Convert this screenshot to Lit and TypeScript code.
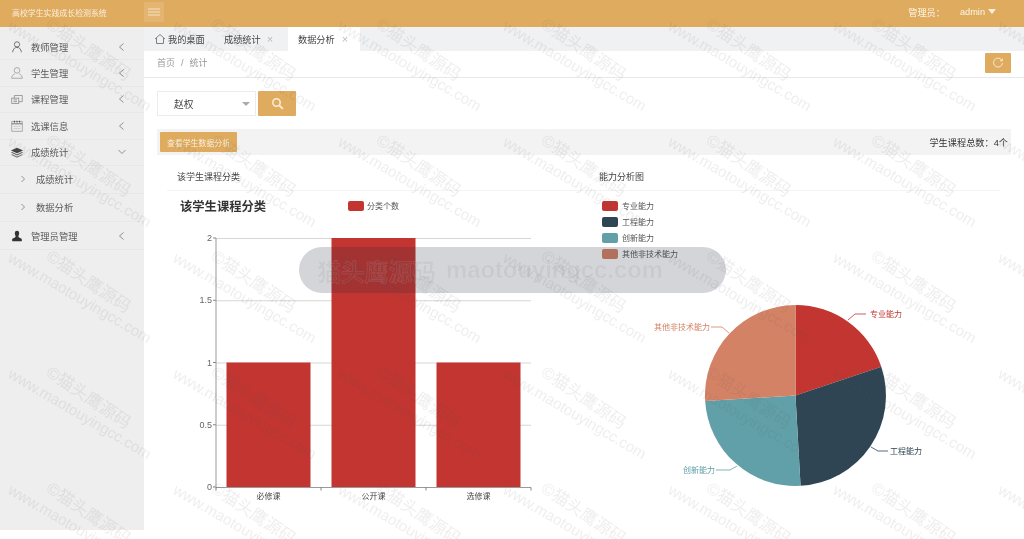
import { LitElement, html, css, svg } from "lit";
import { customElement } from "lit/decorators.js";

const CX = 206.5;
const CY = 204.5;
const R = 90.5;
const polar = (deg: number) => {
  const a = ((deg - 90) * Math.PI) / 180;
  return [CX + R * Math.cos(a), CY + R * Math.sin(a)];
};
const slice = (from: number, to: number) => {
  const [x1, y1] = polar(from);
  const [x2, y2] = polar(to);
  return `M${CX} ${CY}L${x1} ${y1}A${R} ${R} 0 ${to - from > 180 ? 1 : 0} 1 ${x2} ${y2}Z`;
};

const ICONS = {
  user: svg`<circle cx="8" cy="5" r="3" fill="none" stroke="#666" stroke-width="1"/><path d="M3 14c.5-4 2.500-5.500 5-5.500s4.500 1.500 5 5.500" fill="none" stroke="#666" stroke-width="1"/>`,
  student: svg`<circle cx="8" cy="5" r="3.200" fill="none" stroke="#999" stroke-width="0.9"/><path d="M2 14c0-3 2-4.500 3.500-5M14 14c0-3-2-4.500-3.500-5M2 14h12" fill="none" stroke="#999" stroke-width="0.9"/>`,
  course: svg`<rect x="2" y="7" width="8" height="6" fill="none" stroke="#888" stroke-width="0.9"/><path d="M5 7V4h9v7h-4M4 9h4M4 11h4" fill="none" stroke="#888" stroke-width="0.9"/>`,
  calendar: svg`<rect x="2" y="3" width="12" height="11" fill="none" stroke="#999" stroke-width="0.9"/><path d="M2 5.500h12" stroke="#777" stroke-width="1.200"/><path d="M5 2v2M8 2v2M11 2v2" stroke="#444" stroke-width="1.100"/><path d="M4 8.500h8M4 11h8" stroke="#ccc" stroke-width="1"/>`,
  stack: svg`<path d="M8 3l7 3.200L8 9.400 1 6.200z" fill="#444"/><path d="M2.500 8L8 10.500 13.500 8 15 8.700 8 12 1 8.700z" fill="#666"/><path d="M2.500 10.500L8 13l5.500-2.500 1.500.7L8 14.500l-7-3.300z" fill="#777"/>`,
  admin: svg`<path d="M5.500 4.500a2.500 2.500 0 015 0c0 2-.8 3-.9 4 0 1.500 3.900 1.700 3.900 3.500V14h-11v-2c0-1.800 3.900-2 3.900-3.500-.1-1-.9-2-.9-4z" fill="#333"/>`,
};

const MENU = [
  { icon: "user", label: "教师管理", arrow: "left" },
  { icon: "student", label: "学生管理", arrow: "left" },
  { icon: "course", label: "课程管理", arrow: "left" },
  { icon: "calendar", label: "选课信息", arrow: "left" },
  { icon: "stack", label: "成绩统计", arrow: "down" },
  { sub: true, label: "成绩统计" },
  { sub: true, label: "数据分析" },
  { icon: "admin", label: "管理员管理", arrow: "left", tall: true },
];

const BARS = [
  { x: 59.5, h: 124.5, y: 124.5, label: "必修课", lx: 101.5 },
  { x: 164.5, h: 249, y: 0, label: "公开课", lx: 206.5 },
  { x: 269.5, h: 124.5, y: 124.5, label: "选修课", lx: 311.5 },
];

@customElement("app-root")
export class AppRoot extends LitElement {
  static styles = css`
    :host {
      display: block;
      position: relative;
      width: 1024px;
      height: 539px;
      overflow: hidden;
      background: #fff;
      filter: blur(0.4px);
      font-family: "Liberation Sans", "Noto Sans CJK SC", sans-serif;
      color: #555;
    }
    .header { height: 27px; box-sizing: border-box; padding-bottom: 3px; background: #dfab5f; display: flex; align-items: center; color: #fff; }
    .brand { width: 144px; padding-left: 12px; box-sizing: border-box; font-size: 7.9px; color: #fbeedc; }
    .burger { width: 20px; height: 20px; background: #e3b570; display: flex; align-items: center; justify-content: center; }
    .user { margin-left: auto; display: flex; align-items: center; font-size: 9.2px; padding-right: 28px; color: #fdf5e9; }
    .user .role { margin-right: 15px; }
    .caret { width: 0; height: 0; border: 4.5px solid transparent; border-top: 5px solid #fbeedc; border-bottom: 0; margin: -2px 0 0 3px; }
    .body { display: flex; }
    .side { width: 144px; height: 503px; background: #eeeeee; padding-top: 7px; box-sizing: border-box; flex: none; }
    .row {
      height: 26.4px;
      box-sizing: border-box;
      border-bottom: 1px solid #e7e7e7;
      display: flex;
      align-items: center;
      padding-left: 10px;
      font-size: 9.3px;
      color: #5a5a5a;
    }
    .row.sub, .row.tall { height: 28px; }
    .row.tall { padding-top: 1px; }
    .row.sub { padding-left: 20px; }
    .row .ico { width: 14px; height: 14px; margin-right: 7px; flex: none; }
    .row .gt { width: 6px; height: 8px; margin-right: 10px; flex: none; }
    .row .ar { margin-left: auto; margin-right: 18px; flex: none; }
    .main { flex: 1; min-width: 0; }
    .tabs { height: 24px; background: #f0f1f3; display: flex; font-size: 9.2px; color: #444; }
    .tab { display: flex; align-items: center; padding-left: 10px; gap: 6px; box-sizing: border-box; }
    .tab.first { width: 70px; gap: 2px; }
    .tab.mid { width: 74px; }
    .tab.on { background: #fff; width: 72px; gap: 7px; }
    .x { color: #bbb; font-size: 11px; line-height: 1; }
    .crumb {
      height: 27px;
      box-sizing: border-box;
      border-bottom: 1px solid #e8e8e8;
      padding: 0 13px 3px;
      display: flex;
      align-items: center;
      justify-content: space-between;
      font-size: 9px;
      color: #999;
    }
    .crumb i { font-style: normal; margin: 0 6px; }
    .refresh { width: 26px; height: 20px; background: #dfab5f; border-radius: 1px; display: flex; align-items: center; justify-content: center; }
    .search { display: flex; margin: 13px 0 0 13px; gap: 2px; }
    .select {
      width: 99px;
      height: 25px;
      box-sizing: border-box;
      border: 1px solid #ececec;
      display: flex;
      align-items: center;
      justify-content: space-between;
      padding: 0 5px 0 16px;
      font-size: 9.7px;
      color: #444;
    }
    .select b { width: 0; height: 0; border: 4px solid transparent; border-top: 4.5px solid #aaa; border-bottom: 0; }
    .go { width: 38px; height: 25px; background: #dfab5f; border-radius: 1px; display: flex; align-items: center; justify-content: center; }
    .bar {
      margin: 13px 13px 0;
      height: 26px;
      background: #f3f3f3;
      display: flex;
      align-items: center;
      justify-content: space-between;
      padding: 0 3px;
      font-size: 9.2px;
      color: #333;
    }
    .btn { width: 77px; height: 20px; background: #dfab5f; border-radius: 1px; color: #fbeedc; font-size: 7.9px; display: flex; align-items: center; justify-content: center; }
    .cards { display: flex; margin: 0 24px 0 23px; }
    .card { flex: none; }
    .card.l { width: 422px; }
    .card.r { width: 411px; }
    .card h4 {
      margin: 0;
      height: 36px;
      box-sizing: border-box;
      border-bottom: 1px solid #f4f4f4;
      padding: 16px 0 0 10px;
      font-size: 9px;
      line-height: 12px;
      font-weight: 400;
      color: #444;
    }
    .card svg { display: block; }
    .t8 { font-size: 8px; fill: #444; }
    .lg { font-size: 8px; fill: #555; }
    .lbl { font-size: 8px; }
    .tick { font-size: 9px; fill: #666; }
    .title { font-size: 12.3px; font-weight: 700; fill: #333; }
    .overlay { position: absolute; inset: 0; pointer-events: none; }
    .wm { font-family: "Liberation Sans", "Noto Sans CJK SC", sans-serif; fill: rgba(90, 90, 90, 0.1); }
    .pill {
      position: absolute;
      left: 299px;
      top: 247px;
      width: 427px;
      height: 46px;
      border-radius: 23px;
      background: rgba(40, 45, 60, 0.2);
      box-sizing: border-box;
      padding-left: 18px;
      display: flex;
      align-items: center;
      gap: 10px;
      font-size: 23.8px;
      font-weight: 700;
      white-space: pre;
      color: rgba(110, 112, 118, 0.1);
      -webkit-text-stroke: 0.5px rgba(255, 255, 255, 0.14);
    }
  `;

  private watermark() {
    const xs = [7, 172, 337, 502, 667, 832, 997];
    const ys = [-93, 23, 139, 255, 371, 487];
    return xs.flatMap((x) =>
      ys.map(
        (y) => svg`
        <text class="wm" font-size="15.2" transform="translate(${x} ${y + 6}) rotate(30.5)">www.maotouyingcc.com</text>
        <text class="wm" font-size="17" transform="translate(${x + 38} ${y + 4}) rotate(34)">©猫头鹰源码</text>`
      )
    );
  }

  private chevron(dir: string) {
    const d = dir === "down" ? "M0.5 3l3.500 3.500L7.500 3" : "M5.500 1.500L1.500 5l4 3.500";
    return html`<svg class="ar" width="8" height="10" viewBox="0 0 8 10"><path d=${d} fill="none" stroke="#777" stroke-width="0.8"/></svg>`;
  }

  render() {
    return html`
      <div class="header">
        <div class="brand">高校学生实践成长检测系统</div>
        <div class="burger">
          <svg width="12" height="8" viewBox="0 0 12 8"><path d="M0 1h12M0 4h12M0 7h12" stroke="#fbeedc" stroke-width="0.8"/></svg>
        </div>
        <div class="user"><span class="role">管理员：</span><span>admin</span><span class="caret"></span></div>
      </div>
      <div class="body">
        <div class="side">
          ${MENU.map((m) =>
            m.sub
              ? html`<div class="row sub">
                  <svg class="gt" viewBox="0 0 6 8"><path d="M1.500 1l3 3-3 3" fill="none" stroke="#888" stroke-width="0.9"/></svg>${m.label}
                </div>`
              : html`<div class="row ${m.tall ? "tall" : ""}">
                  <svg class="ico" viewBox="0 0 16 16">${ICONS[m.icon as keyof typeof ICONS]}</svg>${m.label}${this.chevron(m.arrow as string)}
                </div>`
          )}
        </div>
        <div class="main">
          <div class="tabs">
            <div class="tab first">
              <svg width="12" height="12" viewBox="0 0 12 12"><path d="M1 6l5-4.500L11 6M2.500 5v5.500h7V5" fill="none" stroke="#666" stroke-width="0.8"/></svg>我的桌面
            </div>
            <div class="tab mid">成绩统计<span class="x">×</span></div>
            <div class="tab on">数据分析<span class="x">×</span></div>
          </div>
          <div class="crumb">
            <span>首页<i>/</i>统计</span>
            <div class="refresh">
              <svg width="12" height="12" viewBox="0 0 12 12"><path d="M10 3.500A4.500 4.500 0 1 0 10.500 6M10.300 1.500v2.300H8" fill="none" stroke="#fbeedc" stroke-width="0.9"/></svg>
            </div>
          </div>
          <div class="search">
            <div class="select"><span>赵权</span><b></b></div>
            <div class="go">
              <svg width="13" height="13" viewBox="0 0 13 13"><circle cx="5.500" cy="5.500" r="3.700" fill="none" stroke="#fbeedc" stroke-width="1.500"/><path d="M8.300 8.300l3.500 3.500" stroke="#fbeedc" stroke-width="1.800"/></svg>
            </div>
          </div>
          <div class="bar">
            <div class="btn">查看学生数据分析</div>
            <span>学生课程总数：4个</span>
          </div>
          <div class="cards">
            <div class="card l">
              <h4>该学生课程分类</h4>
              <svg width="422" height="339" viewBox="0 0 422 339">
                <text class="title" x="13" y="20">该学生课程分类</text>
                <rect x="181" y="10" width="16" height="10" rx="2" fill="#c23531"/>
                <text class="lg" x="200" y="18">分类个数</text>
                <g transform="translate(0 47)">
                  ${[0, 62.25, 124.5, 186.75, 249].map(
                    (y, i) => svg`
                    <path d="M46 ${y}H49" stroke="#666" stroke-width="0.8"/>
                    ${i < 4 ? svg`<path d="M49 ${y + 0.5}H364" stroke="#ccc" stroke-width="0.8"/>` : null}
                    <text class="tick" x="45" y=${y + 3} text-anchor="end">${["2", "1.5", "1", "0.5", "0"][i]}</text>`
                  )}
                  ${BARS.map(
                    (b) => svg`
                    <rect x=${b.x} y=${b.y} width="84" height=${b.h} fill="#c23531"/>
                    <text class="t8" x=${b.lx} y="261" text-anchor="middle">${b.label}</text>`
                  )}
                  <path d="M49 0V249.500H364" fill="none" stroke="#999" stroke-width="1"/>
                  <path d="M49 249.500v3M154 249.500v3M259 249.500v3M364 249.500v3" stroke="#666" stroke-width="0.8"/>
                </g>
              </svg>
            </div>
            <div class="card r">
              <h4>能力分析图</h4>
              <svg width="411" height="339" viewBox="0 0 411 339">
                ${[
                  ["专业能力", "#c23531"],
                  ["工程能力", "#2f4554"],
                  ["创新能力", "#61a0a8"],
                  ["其他非技术能力", "#d48265"],
                ].map(
                  ([t, c], i) => svg`
                  <rect x="13" y=${10 + i * 16} width="16" height="10" rx="2" fill=${c}/>
                  <text class="lg" x="33" y=${18 + i * 16}>${t}</text>`
                )}
                <path d=${slice(0, 71.4)} fill="#c23531"/>
                <path d=${slice(71.4, 176.8)} fill="#2f4554"/>
                <path d=${slice(176.8, 266.5)} fill="#61a0a8"/>
                <path d=${slice(266.5, 360)} fill="#d48265"/>
                <path d="M259 129L266 123H277" fill="none" stroke="#c23531" stroke-width="0.8"/>
                <text class="lbl" fill="#c23531" x="281" y="126">专业能力</text>
                <path d="M282 256L289 260H299" fill="none" stroke="#2f4554" stroke-width="0.8"/>
                <text class="lbl" fill="#2f4554" x="301" y="263">工程能力</text>
                <path d="M148 275L141 279H127" fill="none" stroke="#61a0a8" stroke-width="0.8"/>
                <text class="lbl" fill="#61a0a8" x="94" y="282">创新能力</text>
                <path d="M140 142L133 136H122" fill="none" stroke="#d48265" stroke-width="0.8"/>
                <text class="lbl" fill="#d48265" x="65" y="139">其他非技术能力</text>
              </svg>
            </div>
          </div>
        </div>
      </div>
      <svg class="overlay" width="1024" height="539" viewBox="0 0 1024 539">${this.watermark()}</svg>
      <div class="pill"><span>猫头鹰源码</span><span>maotouyingcc.com</span></div>
    `;
  }
}
